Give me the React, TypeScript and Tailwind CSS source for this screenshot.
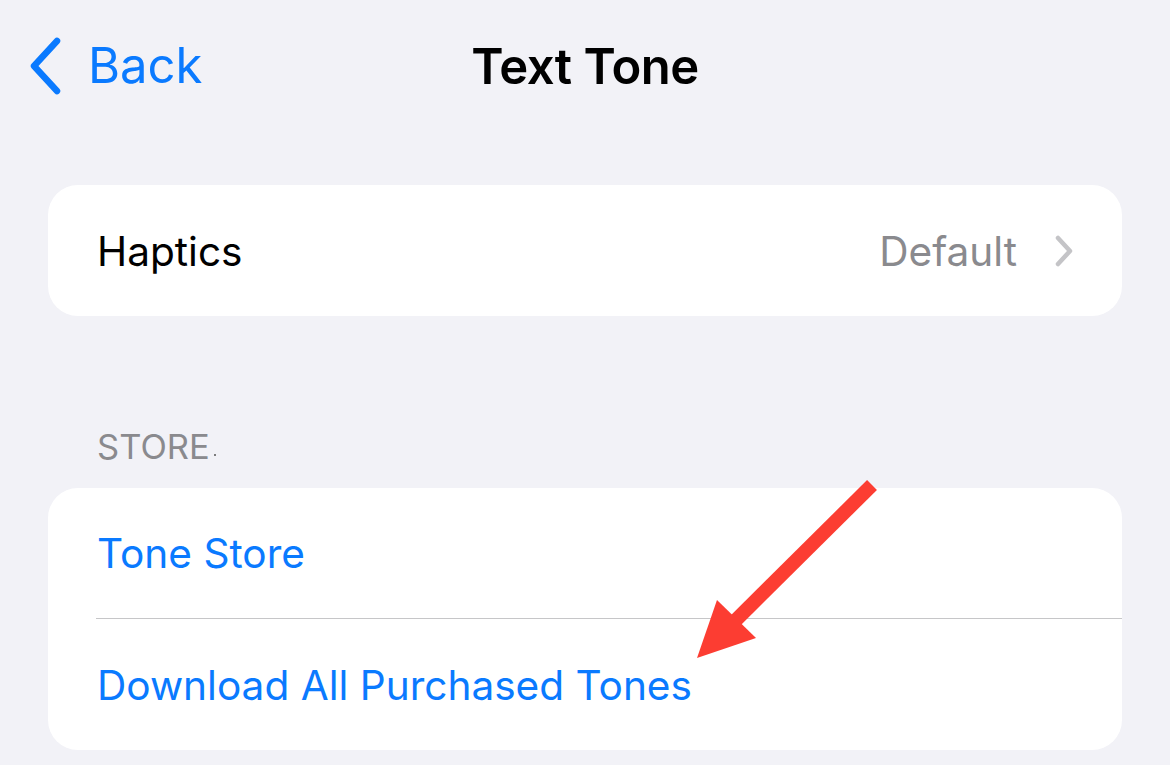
import React from "react";

export default function App() {
  return (
    <div
      className="relative w-[1170px] h-[765px] overflow-hidden bg-[#f2f2f7] text-black"
      style={{ fontFamily: "Inter, 'Noto Sans', sans-serif" }}
    >
      {/* Nav bar */}
      <div className="relative h-[136px]">
        <div className="absolute left-[26px] top-[36px] flex items-center">
          <svg width="36" height="60" viewBox="0 0 36 60" className="mr-[26px]">
            <path d="M31 5 L8 30 L31 55" fill="none" stroke="#0a7aff" strokeWidth="6.5" strokeLinecap="round" strokeLinejoin="round" />
          </svg>
          <span className="text-[49px] leading-none text-[#0a7aff] -mt-[1px]">Back</span>
        </div>
        <div className="absolute left-0 right-0 top-[42px] text-center">
          <span className="text-[49px] leading-none font-semibold tracking-[-0.5px]">Text Tone</span>
        </div>
      </div>

      {/* Haptics card */}
      <div className="mx-[48px] mt-[49px] h-[131px] rounded-[30px] bg-white flex items-center pl-[49px] pr-[48px] pt-[4px]">
        <span className="text-[40.6px] leading-none">Haptics</span>
        <span className="ml-auto text-[40.6px] leading-none text-[#8a8a8e]">Default</span>
        <svg width="20" height="32" viewBox="0 0 20 32" className="ml-[37px] -mt-[3px]">
          <path d="M4 3 L16 16 L4 29" fill="none" stroke="#c4c4c7" strokeWidth="4.5" strokeLinecap="round" strokeLinejoin="round" />
        </svg>
      </div>

      {/* Section header */}
      <div className="mt-[114px] pl-[97px] flex items-end">
        <span className="text-[34.5px] leading-none text-[#8a8a8e]">STORE</span>
        <span className="ml-[4px] mb-[9px] w-[2px] h-[2px] bg-[#555] rounded-full" />
      </div>

      {/* Store card */}
      <div className="mx-[48px] mt-[23px] h-[262px] rounded-[30px] bg-white overflow-hidden">
        <div className="h-[130px] flex items-center pl-[49px] pt-[4px]">
          <span className="text-[40.6px] leading-none text-[#0a7aff]">Tone Store</span>
        </div>
        <div className="ml-[48px] h-[1.5px] bg-[#c6c6c8]" />
        <div className="h-[130px] flex items-center pl-[49px] pt-[4px]">
          <span className="text-[40.6px] leading-none text-[#0a7aff]">Download All Purchased Tones</span>
        </div>
      </div>

      {/* Red arrow annotation */}
      <svg className="absolute left-0 top-0" width="1170" height="765" viewBox="0 0 1170 765">
        <line x1="872" y1="485" x2="730" y2="626" stroke="#fc3d32" strokeWidth="14" />
        <polygon points="697,658 717,600 756,638" fill="#fc3d32" />
      </svg>
    </div>
  );
}
